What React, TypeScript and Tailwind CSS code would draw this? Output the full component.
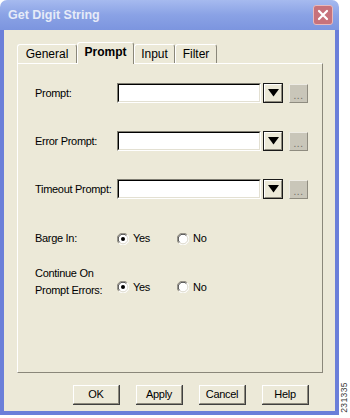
import React from "react";

const FONT = "font-['Liberation_Sans',Arial,sans-serif]";

function Radio({ checked }: { checked?: boolean }) {
  return (
    <svg width="12" height="12" viewBox="0 0 12 12" className="shrink-0">
      <circle cx="6" cy="6" r="5.5" fill="#ffffff" />
      {/* sunken rim: dark top-left, light bottom-right */}
      <path d="M1.8 10.2 A5.5 5.5 0 0 1 10.2 1.8" stroke="#8b887c" strokeWidth="1" fill="none" />
      <path d="M10.2 1.8 A5.5 5.5 0 0 1 1.8 10.2" stroke="#ffffff" strokeWidth="1" fill="none" />
      <path d="M2.6 9.4 A4.5 4.5 0 0 1 9.4 2.6" stroke="#3a3a3a" strokeWidth="1" fill="none" />
      <path d="M9.4 2.6 A4.5 4.5 0 0 1 2.6 9.4" stroke="#dcd9cc" strokeWidth="1" fill="none" />
      {checked && <circle cx="6" cy="6" r="2" fill="#000000" />}
    </svg>
  );
}

function YesNo() {
  return (
    <div className="flex items-center">
      <div className="flex items-center w-[60px]">
        <Radio checked />
        <span className="ml-[4px]">Yes</span>
      </div>
      <div className="flex items-center">
        <Radio />
        <span className="ml-[4px]">No</span>
      </div>
    </div>
  );
}

function PromptRow({ label, first }: { label: string; first?: boolean }) {
  return (
    <div className={`flex items-center h-[20px] ${first ? "" : "mt-[28px]"}`}>
      <span className="w-[82px] whitespace-nowrap">{label}</span>
      {/* sunken textbox */}
      <div className="w-[144px] h-[20px] border-t-[#7f7d72] border-l-[#7f7d72] border-b-white border-r-white border">
        <div className="w-full h-full bg-white border-t-[#000] border-l-[#000] border-b-[#e3e0d2] border-r-[#e3e0d2] border" />
      </div>
      {/* dropdown button */}
      <div className="ml-[2px] w-[20px] h-[20px] border border-[#1a1a1a] bg-[#ece9d8]">
        <div className="w-full h-full border-t-white border-l-white border-b-[#8d8a7d] border-r-[#8d8a7d] border flex items-center justify-center">
          <svg width="11" height="8" viewBox="0 0 11 8">
            <path d="M0 0 H11 L5.5 7.5 Z" fill="#000" />
          </svg>
        </div>
      </div>
      {/* browse button (disabled) */}
      <div className="ml-[6px] w-[19px] h-[19px] bg-[#c9c6b9] border-t-[#eeece4] border-l-[#eeece4] border-b-[#8f8c80] border-r-[#8f8c80] border flex items-end justify-center">
        <span className="text-[10px] leading-[12px] text-[#6f6c62] tracking-[0.5px]">...</span>
      </div>
    </div>
  );
}

function Tab({ label, w, active }: { label: string; w: string; active?: boolean }) {
  return (
    <div
      className={`${w} flex items-center justify-center rounded-t-[3px] border-t border-l border-r border-t-white border-l-white border-r-[#8a877a] text-[12px] tracking-[0px] ${
        active
          ? "h-[22px] -mb-px relative z-10 bg-[#ece9d8] font-bold pb-[4px]"
          : "h-[19px] bg-[#ece9d8]"
      }`}
    >
      {label}
    </div>
  );
}

function Button({ label }: { label: string }) {
  return (
    <div className="w-[47px] h-[20px] border-b border-r border-[#404040] bg-[#ece9d8]">
      <div className="w-full h-full border-t border-l border-t-white border-l-white border-b border-r border-b-[#8d8a7d] border-r-[#8d8a7d] flex items-center justify-center">
        {label}
      </div>
    </div>
  );
}

export default function App() {
  return (
    <div className={`w-[350px] h-[418px] bg-white flex ${FONT} text-[11px] text-black tracking-[-0.3px]`}>
      {/* window */}
      <div className="w-[339px] h-[415px] flex flex-col">
        {/* title bar */}
        <div className="h-[30px] shrink-0 rounded-t-[7px] bg-gradient-to-b from-[#a6baef] via-[#8aa2e5] to-[#7c95df] flex items-center justify-between pl-[8px] pr-[6px]">
          <span className="text-[12.5px] font-bold text-[#e6ebf8] tracking-[0px]">Get Digit String</span>
          <div className="w-[20px] h-[20px] rounded-[3px] bg-[#c7727b] border border-[#e8b9bb] flex items-center justify-center">
            <svg width="12" height="12" viewBox="0 0 12 12">
              <path d="M2 2 L10 10 M10 2 L2 10" stroke="#ffffff" strokeWidth="2.2" strokeLinecap="round" />
            </svg>
          </div>
        </div>

        {/* body */}
        <div className="flex-1 flex flex-col bg-[#ece9d8] border-x-4 border-b-4 border-[#6b7fd9] pl-[13px] pr-[12px] pt-[11px]">
          {/* tabs */}
          <div className="flex items-end h-[22px]">
            <Tab label="General" w="w-[60px]" />
            <Tab label="Prompt" w="w-[57px]" active />
            <Tab label="Input" w="w-[41px]" />
            <Tab label="Filter" w="w-[42px]" />
          </div>

          {/* tab panel */}
          <div className="h-[310px] border border-t-white border-l-white border-b-[#8a877a] border-r-[#8a877a] pl-[17px] pt-[19px]">
            <PromptRow label="Prompt:" first />
            <PromptRow label="Error Prompt:" />
            <PromptRow label="Timeout Prompt:" />

            <div className="flex items-center h-[17px] mt-[31px]">
              <span className="w-[82px]">Barge In:</span>
              <YesNo />
            </div>

            <div className="flex items-end mt-[18px]">
              <div className="w-[82px] leading-[17px]">
                <div>Continue On</div>
                <div>Prompt Errors:</div>
              </div>
              <div className="mb-[4px]">
                <YesNo />
              </div>
            </div>
          </div>

          {/* buttons */}
          <div className="flex justify-end gap-[16px] pr-[14px] mt-[12px]">
            <Button label="OK" />
            <Button label="Apply" />
            <Button label="Cancel" />
            <Button label="Help" />
          </div>
        </div>
      </div>

      {/* figure number strip */}
      <div className="flex-1 flex flex-col justify-end items-center pb-[5px]">
        <span className="[writing-mode:vertical-rl] rotate-180 text-[8.5px] leading-[9px] text-[#333] tracking-[0.4px]">
          231335
        </span>
      </div>
    </div>
  );
}
